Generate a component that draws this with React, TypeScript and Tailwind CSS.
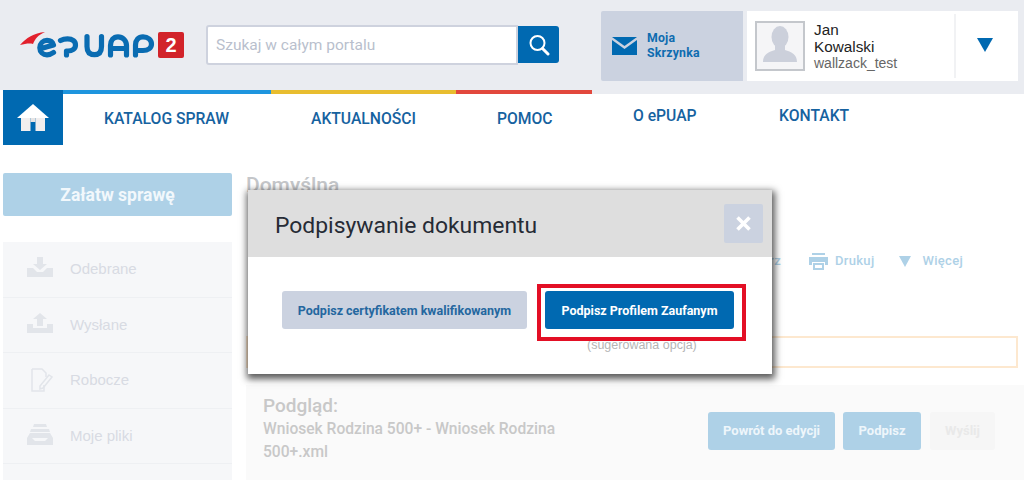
const roboto = "font-['Roboto',sans-serif]";
const arial = "font-['Liberation_Sans',sans-serif]";

function Logo() {
  return (
    <div className="flex items-center">
      <svg width="137" height="30" viewBox="20 29 137 30" fill="none">
        <path d="M20 44 C26 37 34 32 45 31 C38 34 35 38 33 43 C29 42 25 43 20 44Z" fill="#e2202c" />
        <g stroke="#0a6cb2" strokeWidth="5.2" strokeLinecap="round" strokeLinejoin="round">
          <path d="M41 47.5 L53.5 44 C52.5 41 50 39.4 47 39.4 C43 39.4 39.8 42.5 39.8 46.8 C39.8 51 43 53.8 47 53.8 C49.5 53.8 51.5 53 53.5 51.5" />
          <path d="M60.5 39.5 C62.5 38.4 65 37.8 67.5 37.8 C72.5 37.8 75.5 40.5 75.5 44 C75.5 47.8 72 50 68 50 L66.5 50 L66.5 54" />
          <path d="M87 35.5 V45.5 C87 50.8 89.5 53.6 94.5 53.6 C99.5 53.6 101.5 50.8 101.5 45.5 V35.5" />
          <path d="M110.5 54 V44.5 C110.5 39.5 113.5 35.8 118 35.8 C122.5 35.8 126.5 39.5 126.5 44.5 V54 M111 47.5 H126" />
          <path d="M135.5 54 V44 C135.5 39 138.5 35.8 143 35.8 C148 35.8 151.5 39 151.5 43 C151.5 47 148 49.5 143 49.5 L136 49.5" />
        </g>
      </svg>
      <div className={`${arial} ml-[1px] flex h-[26px] w-[26px] items-center justify-center rounded-[2px] bg-[#d2232a] text-[20px] leading-none font-bold text-white`}>
        2
      </div>
    </div>
  );
}

function Header() {
  return (
    <header className="flex h-[90px] items-start bg-[#eaecf1] pt-[11px] pl-[20px]">
      <div className="mt-[19px] w-[186px]">
        <Logo />
      </div>
      <div className="mt-[14px] flex w-[353px]">
        <div className={`${roboto} flex h-[40px] w-[312px] items-center rounded-l-[3px] border-2 border-[#ced2de] bg-white pt-[2px] pl-[8px] text-[15.5px] text-[#b9bfcd]`}>
          Szukaj w całym portalu
        </div>
        <div className="mt-[1px] flex h-[37px] w-[41px] items-center justify-center rounded-r-[3px] bg-[#0069b1]">
          <svg width="22" height="22" viewBox="0 0 22 22" fill="none" stroke="#fff" strokeWidth="2" strokeLinecap="round">
            <circle cx="9.5" cy="9" r="7" />
            <path d="M14.5 14.5 L20 20" strokeWidth="3" />
          </svg>
        </div>
      </div>
      <div className={`${roboto} ml-[42px] flex h-[70px] w-[142px] items-center rounded-l-[2px] bg-[#cbd2e0] pl-[11px]`}>
        <svg width="25" height="18" viewBox="0 0 25 18" className="mt-[-1px]">
          <path d="M0 0 H25 L12.5 9 Z" fill="#0069b1" />
          <path d="M0 3 L12.5 12 L25 3 V18 H0 Z" fill="#0069b1" />
        </svg>
        <div className="mt-[-1px] ml-[10px] text-[12.3px] leading-[15px] font-bold tracking-[0.2px] text-[#0f6cb0]">
          Moja
          <br />
          Skrzynka
        </div>
      </div>
      <div className="ml-[4px] flex h-[70px] w-[271px] items-center bg-white pl-[8px]">
        <div className="flex h-[50px] w-[50px] items-end justify-center border-2 border-[#c4c7cc] bg-[#f5f5f7]">
          <svg width="36" height="38" viewBox="0 0 36 38" fill="#ccd0db" className="mb-[6px]">
            <ellipse cx="18" cy="12" rx="8.5" ry="11" />
            <path d="M13 20 H23 V25 C29 27 35 29 35 37 H1 C1 29 7 27 13 25 Z" />
          </svg>
        </div>
        <div className={`${arial} ml-[9px] w-[140px] text-[15.3px] leading-[17px] text-[#222]`}>
          Jan
          <br />
          Kowalski
          <div className="text-[14px] text-[#666]">wallzack_test</div>
        </div>
        <div className="flex h-[64px] w-[64px] items-center justify-center border-l-2 border-[#f1f2f4] pr-[4px]">
          <div className="mt-[-3px] h-0 w-0 border-x-[8px] border-t-[14px] border-x-transparent border-t-[#0069b1]" />
        </div>
      </div>
    </header>
  );
}

function Nav() {
  return (
    <nav className={`${roboto} flex h-[55px] pl-[3px] text-[15.7px] font-medium text-[#16629f]`}>
      <div className="flex h-[55px] w-[60px] items-center justify-center bg-[#0069b1]">
        <svg width="32" height="28" viewBox="0 0 32 28" className="mt-[1px]">
          <path d="M16 0 L32 14 H0 Z" fill="#fff" />
          <path d="M4 14 H13.5 V27 H4 Z M18.5 14 H28 V27 H18.5 Z" fill="#f1eeee" />
          <path d="M13.5 14 H18.5 V18 H13.5 Z" fill="#e6e4e4" />
        </svg>
      </div>
      <div className="w-[529px]">
        <div className="flex h-[4px]">
          <div className="w-[208px] bg-[#1e95de]" />
          <div className="w-[185px] bg-[#e8bd2f]" />
          <div className="w-[136px] bg-[#e2483d]" />
        </div>
        <div className="flex pt-[15px] leading-[20px]">
          <span className="ml-[41px] w-[207px]">KATALOG SPRAW</span>
          <span className="w-[186px]">AKTUALNOŚCI</span>
          <span>POMOC</span>
        </div>
      </div>
      <div className="flex-1">
        <div className="h-[4px] bg-[#eaecf1]" />
        <div className="ml-[41px] flex pt-[12px] leading-[20px]">
          <span className="w-[146px]">O ePUAP</span>
          <span>KONTAKT</span>
        </div>
      </div>
    </nav>
  );
}

const menu = [
  {
    label: "Odebrane",
    icon: (
      <>
        <path d="M10 0 H16 V7 H20 L13 13 L6 7 H10 Z" />
        <path d="M0 11 H6 L10 15 H16 L20 11 H26 V20 H0 Z" />
      </>
    ),
  },
  {
    label: "Wysłane",
    icon: (
      <>
        <path d="M10 13 H16 V6 H20 L13 0 L6 6 H10 Z" />
        <path d="M0 11 H6 V15 H20 V11 H26 V20 H0 Z" />
      </>
    ),
  },
  {
    label: "Robocze",
    icon: (
      <>
        <path d="M5 1 H15 L19 5 V9 M17 17 V23 H5 V1" fill="none" stroke="#e2e5ea" strokeWidth="1.5" />
        <path d="M22 7 L25 9 L16 20 L13 21 L13 18 Z" fill="none" stroke="#e2e5ea" strokeWidth="1.5" />
      </>
    ),
  },
  {
    label: "Moje pliki",
    icon: (
      <>
        <path d="M7 0 H19 L20 3 H6 Z M4 5 H22 L23 8 H3 Z" />
        <path d="M3 9 H23 L26 14 V21 H0 V14 Z M5 14 L8 17 H18 L21 14 Z" fillRule="evenodd" />
      </>
    ),
  },
];

function Sidebar() {
  return (
    <aside className="w-[229px] shrink-0">
      <div className={`${roboto} flex h-[43px] items-center justify-center rounded-[2px] bg-[#aed1e7] pt-[1px] text-[17.5px] font-bold text-[#f2f8fc]`}>
        Załatw sprawę
      </div>
      <ul className={`${arial} mt-[26px] bg-[#f6f7f9] text-[15px] text-[#d8dbe3]`}>
        {menu.map((item) => (
          <li key={item.label} className="flex h-[55.5px] items-center border-b border-[#eef0f3] pl-[24px]">
            <svg width="26" height="24" viewBox="0 0 26 24" fill="#e2e5ea">
              {item.icon}
            </svg>
            <span className="ml-[17px]">{item.label}</span>
          </li>
        ))}
        <li className="h-[20px]" />
      </ul>
    </aside>
  );
}

function Main() {
  return (
    <main className={`${roboto} ml-[14px] flex-1`}>
      <h1 className="mt-[-1px] text-[21px] leading-[26px] font-medium text-[#c4c6c9]">Domyślna</h1>
      <div className="mt-[51px] flex h-[24px] items-center justify-end pr-[61px] text-[13px] font-medium tracking-[0.3px] text-[#aed1e7]">
        <span className="mr-[28px]">Pobierz</span>
        <svg width="19" height="17" viewBox="0 0 19 17" fill="#aed1e7">
          <path d="M3 0 H16 V2 H3 Z M0 4 H19 V12 H16 V9 H3 V12 H0 Z M4 10 H15 V17 H4 Z M6 12 V15 H13 V12 Z" fillRule="evenodd" />
        </svg>
        <span className="ml-[7px]">Drukuj</span>
        <div className="ml-[25px] h-0 w-0 border-x-[6px] border-t-[11px] border-x-transparent border-t-[#aed1e7]" />
        <span className="ml-[11px]">Więcej</span>
      </div>
      <div className="mt-[63px] h-[32px] w-[772px] border-2 border-[#fde8cf]" />
      <section className="mt-[17px] flex h-[95px] bg-[#fafafa] pt-[10px] pl-[17px]">
        <div className="w-[300px] text-[#c8c8c8]">
          <div className="text-[19px] leading-[22px] font-medium">Podgląd:</div>
          <div className="mt-[1px] text-[15.6px] leading-[23px] font-medium">
            Wniosek Rodzina 500+ - Wniosek Rodzina 500+.xml
          </div>
        </div>
        <div className="mt-[17px] ml-[145px] flex h-[38px] gap-[8px] text-[13px] leading-[38px] font-bold text-[#eef6fb]">
          <div className="w-[127px] rounded-[3px] bg-[#aed1e7] text-center">Powrót do edycji</div>
          <div className="w-[78px] rounded-[3px] bg-[#aed1e7] text-center">Podpisz</div>
          <div className="ml-[1px] w-[65px] rounded-[3px] bg-[#f6f6f6] text-center text-[#e9e9e9]">Wyślij</div>
        </div>
      </section>
    </main>
  );
}

function SignDialog() {
  return (
    <div className={`${roboto} absolute top-[190px] left-[248px] h-[184px] w-[524px] bg-white shadow-[1px_3px_7px_2px_rgba(0,0,0,0.65)]`}>
      <div className="flex h-[67px] items-center justify-between bg-[#dedede] pr-[9px] pl-[27px]">
        <h2 className="pt-[5px] text-[22.9px] font-normal text-[#262b35]">Podpisywanie dokumentu</h2>
        <div className="flex h-[39px] w-[39px] items-center justify-center rounded-[2px] bg-[#cbd2e0]">
          <svg width="15" height="15" viewBox="0 0 15 15" stroke="#fff" strokeWidth="3.6">
            <path d="M1.5 1.5 L13.5 13.5 M13.5 1.5 L1.5 13.5" />
          </svg>
        </div>
      </div>
      <div className="flex pt-[34px] pl-[34px] text-[12.5px] font-bold">
        <div className="flex h-[38px] w-[245px] items-center justify-center rounded-[3px] bg-[#cbd2e0] pt-[2px] text-[#24679f]">
          Podpisz certyfikatem kwalifikowanym
        </div>
        <div className="ml-[18px] flex h-[38px] w-[189px] items-center justify-center rounded-[3px] bg-[#0069b1] pt-[2px] text-white">
          Podpisz Profilem Zaufanym
        </div>
      </div>
      <div className={`${arial} mt-[9px] ml-[339px] text-[12.5px] leading-[14px] text-[#b5b5b5]`}>(sugerowana opcja)</div>
      {/* red marker drawn over the screenshot */}
      <div className="absolute top-[94px] left-[289px] h-[57px] w-[209px] border-[4px] border-[#e30f25]" />
    </div>
  );
}

export default function App() {
  return (
    <div className="relative h-[480px] w-[1024px] overflow-hidden bg-white">
      <Header />
      <Nav />
      <div className="flex pt-[28px] pl-[3px]">
        <Sidebar />
        <Main />
      </div>
      <SignDialog />
    </div>
  );
}
